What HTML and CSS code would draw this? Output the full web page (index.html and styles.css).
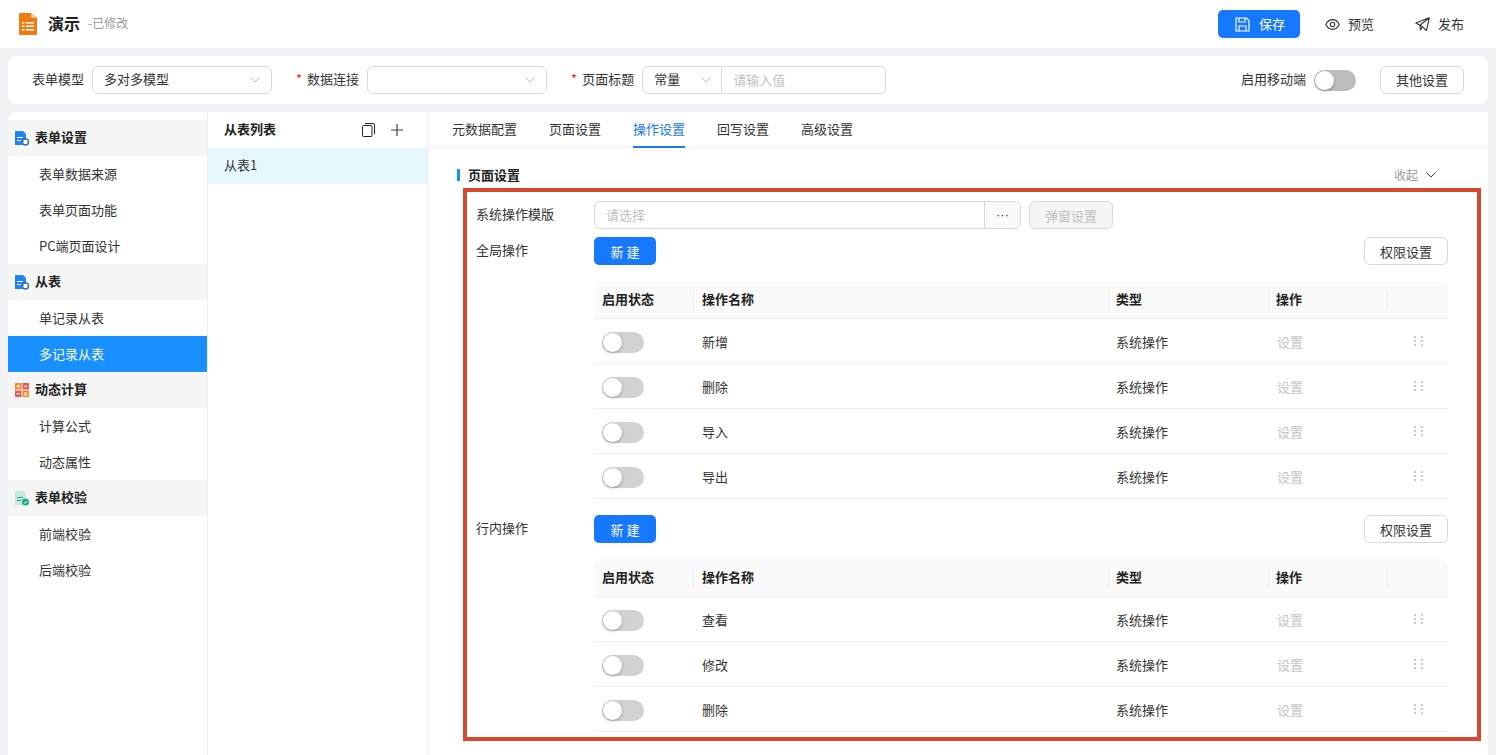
FILE: index.html
```html
<!DOCTYPE html>
<html lang="zh-CN">
<head>
    <meta charset="UTF-8">
    <title>演示</title>
    <link rel="stylesheet" href="styles.css">
</head>
<body>
    <header class="topbar">
        <svg class="logo" width="18" height="22" viewBox="0 0 18 22">
            <path d="M1 0h11l6 5v16a1 1 0 0 1-1 1H1a1 1 0 0 1-1-1V1a1 1 0 0 1 1-1z" fill="#f07c10"/>
            <path d="M12 0l6 5h-5a1 1 0 0 1-1-1z" fill="#f8c48c"/>
            <path d="M3 9h2.500v1.500H3zM7 9h8v1.500H7zM3 12.500h2.500V14H3zM7 12.500h8V14H7zM3 16h2.500v1.500H3zM7 16h8v1.500H7z" fill="#fff"/>
        </svg>
        <span class="app-title">演示</span>
        <span class="app-state">-已修改</span>
        <div class="top-actions">
            <button class="save-btn">
                <svg width="15" height="15" viewBox="0 0 15 15" fill="none" stroke="#fff" stroke-width="1.200"><path d="M1 1h10.500L14 3.500V14H1z"/><path d="M4 1v4h6V1M4 14V9h7v5"/></svg>
                <span>保存</span>
            </button>
            <button class="ghost-btn preview-btn">
                <svg width="15" height="11" viewBox="0 0 15 11" fill="none" stroke="#333" stroke-width="1.100"><path d="M.7 5.500C2.500 2 4.800.6 7.500.6s5 1.400 6.800 4.900c-1.800 3.500-4.100 4.900-6.800 4.900S2.500 9 .7 5.500z"/><circle cx="7.500" cy="5.500" r="2.200"/></svg>
                <span>预览</span>
            </button>
            <button class="ghost-btn publish-btn">
                <svg width="15" height="15" viewBox="0 0 15 15" fill="none" stroke="#333" stroke-width="1.100" stroke-linejoin="round"><path d="M14.300.8L.8 6l4.200 2.300L14.300.8zM14.300.8L11.500 13.500 7.500 9.800 5 8.300 5.400 13l2.100-3.200"/></svg>
                <span>发布</span>
            </button>
        </div>
    </header>

    <section class="filter-bar">
        <label class="field-label first-label">表单模型</label>
        <div class="select model-select">多对多模型<svg class="arrow" width="10" height="6" viewBox="0 0 10 6"><path d="M.5.500L5 5 9.500.500" fill="none" stroke="#bbb"/></svg></div>
        <label class="field-label req link-label">数据连接</label>
        <div class="select model-select"><svg class="arrow" width="10" height="6" viewBox="0 0 10 6"><path d="M.5.500L5 5 9.500.500" fill="none" stroke="#bbb"/></svg></div>
        <label class="field-label req title-label">页面标题</label>
        <div class="title-group">
            <div class="select const-select">常量<svg class="arrow" width="10" height="6" viewBox="0 0 10 6"><path d="M.5.500L5 5 9.500.500" fill="none" stroke="#bbb"/></svg></div>
            <div class="value-input">请输入值</div>
        </div>
        <div class="filter-right">
            <label class="field-label">启用移动端</label>
            <span class="switch"></span>
            <button class="plain-btn other-btn">其他设置</button>
        </div>
    </section>

    <main class="workspace">
        <nav class="sidebar">
            <div class="nav-group">
                <svg class="nav-icon" width="16" height="16" viewBox="0 0 16 16"><path d="M1 1h8l3 3v11H1z" fill="#1f84f0"/><path d="M3 7h6v1H3zM3 10h4v1H3z" fill="#fff"/><circle cx="11.500" cy="12" r="3" fill="#fff" stroke="#3f6fb5" stroke-width="1.500"/></svg>
                <span>表单设置</span>
            </div>
            <a class="nav-item">表单数据来源</a>
            <a class="nav-item">表单页面功能</a>
            <a class="nav-item">PC端页面设计</a>
            <div class="nav-group">
                <svg class="nav-icon" width="16" height="16" viewBox="0 0 16 16"><path d="M1 1h8l3 3v11H1z" fill="#1f84f0"/><path d="M3 7h6v1H3zM3 10h4v1H3z" fill="#fff"/><circle cx="11.500" cy="12" r="3" fill="#fff" stroke="#3f6fb5" stroke-width="1.500"/></svg>
                <span>从表</span>
            </div>
            <a class="nav-item">单记录从表</a>
            <a class="nav-item active">多记录从表</a>
            <div class="nav-group">
                <svg class="nav-icon" width="16" height="16" viewBox="0 0 16 16"><rect x="1" y="1" width="6.500" height="6.500" fill="#f08a24"/><rect x="8.500" y="1" width="6.500" height="6.500" fill="#d9605c"/><rect x="1" y="8.500" width="6.500" height="6.500" fill="#d9605c"/><rect x="8.500" y="8.500" width="6.500" height="6.500" fill="#f08a24"/><path d="M2.500 3.800h3.500v1H2.500zM3.800 2.500h1v3.500h-1zM10 3.800h3.500v1H10zM2.500 11.300h3.500v1H2.500zM10 10.500h3.500v1H10zM10 12.500h3.500v1H10z" fill="#fff"/></svg>
                <span>动态计算</span>
            </div>
            <a class="nav-item">计算公式</a>
            <a class="nav-item">动态属性</a>
            <div class="nav-group">
                <svg class="nav-icon" width="16" height="16" viewBox="0 0 16 16"><path d="M1 1h8l3 3v11H1z" fill="#c5e9df"/><path d="M3 7h6v1H3zM3 10h4v1H3z" fill="#17a88a"/><circle cx="11.500" cy="12" r="3.500" fill="#17a88a"/><path d="M9.800 12l1.300 1.300 2-2.200" fill="none" stroke="#fff"/></svg>
                <span>表单校验</span>
            </div>
            <a class="nav-item">前端校验</a>
            <a class="nav-item">后端校验</a>
        </nav>

        <aside class="sub-list">
            <div class="sub-head">
                <span>从表列表</span>
                <svg class="copy-icon" width="13" height="14" viewBox="0 0 13 14" fill="none" stroke="#222"><rect x=".5" y="2.500" width="9.500" height="11" rx="1"/><path d="M3 .5h8a1.500 1.500 0 0 1 1.500 1.500v9"/></svg>
                <svg class="plus-icon" width="12" height="12" viewBox="0 0 12 12" stroke="#444" stroke-width="1.200"><path d="M0 6h12M6 0v12"/></svg>
            </div>
            <div class="sub-row">从表1</div>
        </aside>

        <div class="content">
            <div class="tabs">
                <span class="tab">元数据配置</span>
                <span class="tab">页面设置</span>
                <span class="tab active">操作设置</span>
                <span class="tab">回写设置</span>
                <span class="tab">高级设置</span>
            </div>
            <div class="panel">
                <div class="section-head">
                    <span class="section-title">页面设置</span>
                    <span class="collapse">收起<svg width="10" height="6" viewBox="0 0 10 6"><path d="M.5.500L5 5 9.500.500" fill="none" stroke="#444"/></svg></span>
                </div>

                <div class="form-row template-row">
                    <span class="row-label">系统操作模版</span>
                    <div class="picker"><span class="picker-input">请选择</span><span class="picker-more">···</span></div>
                    <button class="disabled-btn">弹窗设置</button>
                </div>

                <div class="form-row">
                    <span class="row-label">全局操作</span>
                    <div class="op-block">
                        <div class="op-tools"><button class="primary-btn">新 建</button><button class="plain-btn">权限设置</button></div>
                        <div class="op-table">
                            <div class="op-row op-header"><span class="c-state">启用状态</span><span class="c-name">操作名称</span><span class="c-type">类型</span><span class="c-act">操作</span><span class="c-drag"></span></div>
                            <div class="op-row"><span class="c-state"><i class="switch"></i></span><span class="c-name">新增</span><span class="c-type">系统操作</span><span class="c-act muted">设置</span><span class="c-drag"><i class="dots"></i></span></div>
                            <div class="op-row"><span class="c-state"><i class="switch"></i></span><span class="c-name">删除</span><span class="c-type">系统操作</span><span class="c-act muted">设置</span><span class="c-drag"><i class="dots"></i></span></div>
                            <div class="op-row"><span class="c-state"><i class="switch"></i></span><span class="c-name">导入</span><span class="c-type">系统操作</span><span class="c-act muted">设置</span><span class="c-drag"><i class="dots"></i></span></div>
                            <div class="op-row"><span class="c-state"><i class="switch"></i></span><span class="c-name">导出</span><span class="c-type">系统操作</span><span class="c-act muted">设置</span><span class="c-drag"><i class="dots"></i></span></div>
                        </div>
                    </div>
                </div>

                <div class="form-row">
                    <span class="row-label">行内操作</span>
                    <div class="op-block">
                        <div class="op-tools"><button class="primary-btn">新 建</button><button class="plain-btn">权限设置</button></div>
                        <div class="op-table">
                            <div class="op-row op-header"><span class="c-state">启用状态</span><span class="c-name">操作名称</span><span class="c-type">类型</span><span class="c-act">操作</span><span class="c-drag"></span></div>
                            <div class="op-row"><span class="c-state"><i class="switch"></i></span><span class="c-name">查看</span><span class="c-type">系统操作</span><span class="c-act muted">设置</span><span class="c-drag"><i class="dots"></i></span></div>
                            <div class="op-row"><span class="c-state"><i class="switch"></i></span><span class="c-name">修改</span><span class="c-type">系统操作</span><span class="c-act muted">设置</span><span class="c-drag"><i class="dots"></i></span></div>
                            <div class="op-row"><span class="c-state"><i class="switch"></i></span><span class="c-name">删除</span><span class="c-type">系统操作</span><span class="c-act muted">设置</span><span class="c-drag"><i class="dots"></i></span></div>
                        </div>
                    </div>
                </div>
            </div>
        </div>
    </main>

    <div class="callout"></div>
</body>
</html>
```

FILE: styles.css
```css
* {
    margin: 0;
    padding: 0;
    box-sizing: border-box;
}

html, body {
    height: 100%;
    overflow: hidden;
}

body {
    display: flex;
    flex-direction: column;
    position: relative;
    background-color: #f0f1f5;
    font-family: "Noto Sans CJK SC", "Noto Sans", sans-serif;
    font-size: 13px;
    line-height: 20px;
    color: #333;
}

button {
    font-family: inherit;
    font-size: 13px;
    cursor: pointer;
}

/* top bar */
.topbar {
    display: flex;
    align-items: center;
    flex: none;
    height: 48px;
    padding: 0 32px 0 19px;
    background-color: #fff;
}

.logo {
    margin-right: 11px;
}

.app-title {
    padding-bottom: 2px;
    font-size: 16px;
    font-weight: 700;
    color: #222;
}

.app-state {
    margin-left: 8px;
    padding-bottom: 2px;
    font-size: 12px;
    color: #999;
}

.top-actions {
    display: flex;
    align-items: center;
    margin-left: auto;
}

.top-actions span {
    padding-bottom: 2px;
}

.save-btn {
    display: flex;
    align-items: center;
    justify-content: center;
    gap: 9px;
    width: 82px;
    height: 28px;
    padding-left: 2px;
    border: none;
    border-radius: 5px;
    background-color: #1677ff;
    color: #fff;
}

.ghost-btn {
    display: flex;
    align-items: center;
    gap: 8px;
    border: none;
    background: none;
    color: #333;
}

.preview-btn {
    margin-left: 25px;
}

.publish-btn {
    margin-left: 41px;
}

/* filter bar */
.filter-bar {
    display: flex;
    align-items: center;
    flex: none;
    height: 48px;
    margin: 8px 8px 0;
    padding: 0 24px;
    border-radius: 8px;
    background-color: #fff;
}

.field-label {
    padding-bottom: 2px;
    white-space: nowrap;
    color: #333;
}

.req::before {
    content: "*";
    margin-right: 5px;
    color: #f5222d;
}

.first-label {
    margin-right: 8px;
}

.link-label {
    margin-left: 24px;
    margin-right: 8px;
}

.title-label {
    margin-left: 24px;
    margin-right: 8px;
}

.select {
    display: flex;
    align-items: center;
    justify-content: space-between;
    height: 28px;
    padding: 0 11px 2px 11px;
    border: 1px solid #d9d9d9;
    border-radius: 6px;
}

.select .arrow {
    margin-top: 2px;
}

.model-select {
    width: 180px;
}

.model-select .arrow:only-child {
    margin-left: auto;
}

.title-group {
    display: flex;
    width: 244px;
}

.const-select {
    width: 80px;
    padding-right: 10px;
    border-radius: 6px 0 0 6px;
}

.value-input {
    flex: 1;
    height: 28px;
    padding: 0 11px;
    line-height: 26px;
    border: 1px solid #d9d9d9;
    border-left: none;
    border-radius: 0 6px 6px 0;
    color: #bfbfbf;
}

.filter-right {
    display: flex;
    align-items: center;
    margin-left: auto;
}

.switch {
    display: block;
    position: relative;
    width: 42px;
    height: 21px;
    border-radius: 11px;
    background-color: #d2d2d2;
}

.switch::after {
    content: "";
    position: absolute;
    top: 1px;
    left: 1px;
    width: 19px;
    height: 19px;
    border-radius: 50%;
    background-color: #fff;
    box-shadow: 0 1px 3px rgba(0, 0, 0, 0.3);
}

.filter-right .switch {
    margin: 0 24px 0 8px;
    background-color: #bdbdbd;
}

.plain-btn {
    width: 84px;
    height: 28px;
    border: 1px solid #d9d9d9;
    border-radius: 6px;
    background-color: #fff;
    color: #333;
}

.other-btn {
    padding-bottom: 2px;
}

/* main area */
.workspace {
    display: flex;
    flex: 1;
    min-height: 0;
    margin: 8px 8px 0;
}

.sidebar {
    flex: none;
    width: 200px;
    padding-top: 8px;
    border-right: 1px solid #eee;
    border-radius: 8px 0 0 0;
    background-color: #fff;
}

.nav-group {
    display: flex;
    align-items: center;
    height: 36px;
    padding-left: 6px;
    background-color: #f5f5f5;
    font-weight: 700;
    color: #222;
}

.nav-group span {
    padding-bottom: 2px;
}

.nav-icon {
    margin-right: 5px;
}

.nav-item {
    display: block;
    height: 36px;
    padding-left: 31px;
    line-height: 35px;
    color: #333;
}

.nav-item.active {
    background-color: #1890ff;
    color: #fff;
}

.sub-list {
    flex: none;
    width: 220px;
    border-right: 1px solid #eee;
    background-color: #fff;
}

.sub-head {
    display: flex;
    align-items: center;
    height: 36px;
    padding: 0 24px 0 16px;
    font-weight: 700;
    color: #222;
}

.sub-head span {
    padding-bottom: 2px;
}

.copy-icon {
    margin-left: auto;
}

.plus-icon {
    margin-left: 16px;
}

.sub-row {
    height: 36px;
    padding-left: 16px;
    line-height: 34px;
    background-color: #e6f7ff;
}

.content {
    flex: 1;
    min-width: 0;
    background-color: #fff;
}

.tabs {
    display: flex;
    gap: 32px;
    height: 36px;
    padding-left: 24px;
    border-bottom: 1px solid #eee;
}

.tab {
    height: 36px;
    line-height: 34px;
    color: #333;
}

.tab.active {
    border-bottom: 2px solid #1677ff;
    color: #1677ff;
}

.panel {
    padding: 0 40px 0 29px;
}

.section-head {
    display: flex;
    align-items: center;
    justify-content: space-between;
    height: 53px;
    padding-right: 12px;
}

.section-title {
    padding-left: 8px;
    border-left: 3px solid #1890ff;
    line-height: 12px;
    font-weight: 700;
    color: #222;
}

.collapse {
    display: flex;
    align-items: center;
    gap: 8px;
    font-size: 12px;
    color: #999;
}

.form-row {
    display: flex;
    margin-bottom: 16px;
}

.template-row {
    align-items: flex-start;
    margin-bottom: 8px;
}

.row-label {
    flex: none;
    width: 118px;
    margin-left: 19px;
    line-height: 26px;
}

.picker {
    display: flex;
    width: 427px;
    height: 28px;
    border: 1px solid #d9d9d9;
    border-radius: 6px;
}

.picker-input {
    flex: 1;
    padding-left: 11px;
    line-height: 25px;
    color: #bfbfbf;
}

.picker-more {
    width: 36px;
    border-left: 1px solid #d9d9d9;
    border-radius: 0 6px 6px 0;
    background-color: #fafafa;
    text-align: center;
    font-family: "Liberation Sans", sans-serif;
    line-height: 25px;
    color: #333;
}

.disabled-btn {
    width: 84px;
    height: 28px;
    margin-left: 8px;
    border: 1px solid #d9d9d9;
    border-radius: 6px;
    background-color: #f5f5f5;
    color: #bfbfbf;
}

.op-block {
    flex: 1;
    min-width: 0;
}

.op-tools {
    display: flex;
    justify-content: space-between;
    margin-bottom: 16px;
}

.primary-btn {
    width: 62px;
    height: 28px;
    border: none;
    border-radius: 5px;
    background-color: #1677ff;
    color: #fff;
}

.op-row {
    display: flex;
    align-items: center;
    height: 45px;
    padding-top: 2px;
    border-bottom: 1px solid #eee;
}

.op-header {
    height: 38px;
    padding-top: 0;
    border-radius: 8px 8px 0 0;
    background-color: #fafafa;
    font-weight: 700;
    color: #222;
}

.op-row > span {
    flex: none;
    padding-left: 8px;
}

.op-header > span {
    height: 20px;
    line-height: 18px;
}

.op-header > span + span {
    position: relative;
}

.op-header > span + span::before {
    content: "";
    position: absolute;
    top: 0;
    left: 0;
    width: 1px;
    height: 20px;
    background-color: #eee;
}

.op-header > .c-name::before {
    left: -1px;
}

.c-state {
    width: 100px;
}

.c-name {
    width: 414px;
}

.c-type {
    width: 160px;
}

.c-act {
    width: 119px;
}

.c-drag {
    flex: 1 !important;
    padding-left: 27px !important;
}

.muted {
    padding-left: 9px !important;
    color: #c4c4c4;
}

.dots {
    display: block;
    width: 9px;
    height: 11px;
    background-image: radial-gradient(circle at 1px 1px, #c8c8c8 1px, transparent 1px);
    background-size: 7px 4px;
    margin-bottom: 2px;
}

/* red callout drawn on top of the screenshot */
.callout {
    position: absolute;
    top: 188px;
    left: 463px;
    width: 1018px;
    height: 553px;
    border: 4px solid #d9482e;
    pointer-events: none;
}
```
